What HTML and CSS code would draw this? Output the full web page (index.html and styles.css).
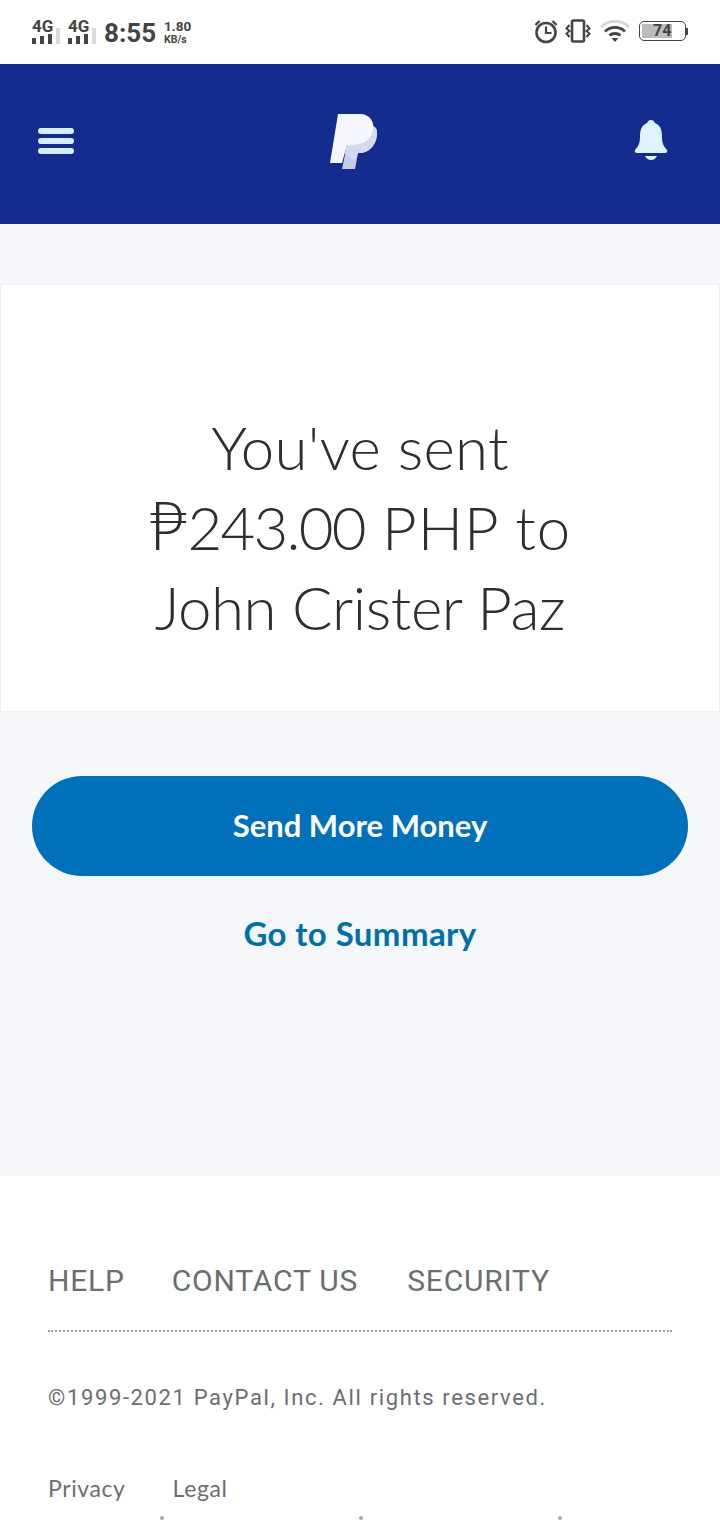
FILE: index.html
```html
<!DOCTYPE html>
<html lang="en">
  <head>
    <meta charset="UTF-8" />
    <meta name="viewport" content="width=device-width, initial-scale=1.0" />
    <title>PayPal - Money Sent</title>
    <link rel="stylesheet" href="styles.css">
  </head>
  <body>
    <div class="status-bar">
      <div class="status-left">
        <div class="signal">
          <span class="signal-label">4G</span>
          <svg class="signal-bars" width="28" height="17" viewBox="0 0 28 17">
            <rect x="0" y="11" width="4" height="6" fill="#444" />
            <rect x="8" y="9" width="4" height="8" fill="#444" />
            <rect x="16" y="7" width="4" height="10" fill="#444" />
            <rect x="24" y="1" width="4" height="16" fill="#d8d8d8" />
          </svg>
        </div>
        <div class="signal">
          <span class="signal-label">4G</span>
          <svg class="signal-bars" width="28" height="17" viewBox="0 0 28 17">
            <rect x="0" y="11" width="4" height="6" fill="#444" />
            <rect x="8" y="9" width="4" height="8" fill="#444" />
            <rect x="16" y="7" width="4" height="10" fill="#444" />
            <rect x="24" y="1" width="4" height="16" fill="#d8d8d8" />
          </svg>
        </div>
        <span class="clock">8:55</span>
        <div class="speed"><span>1.80</span><span class="speed-unit">KB/s</span></div>
      </div>
      <div class="status-right">
        <svg width="24" height="26" viewBox="0 0 24 26" fill="none" stroke="#444">
          <circle cx="12" cy="14.500" r="9.500" stroke-width="2.600" />
          <path d="M12 8.500v6.500h5.500" stroke-width="2.200" />
          <path d="M1.500 7l4-4M22.500 7l-4-4" stroke-width="2.400" />
        </svg>
        <svg class="vibrate" width="26" height="26" viewBox="0 0 26 26" fill="none" stroke="#444">
          <rect x="7" y="2.500" width="12" height="21" rx="1.500" stroke-width="2.600" />
          <path d="M4.500 7L1.500 10.500 4.500 13 1.500 15.500 4.500 19M21.500 7l3 3.500-3 2.500 3 2.500-3 3.500" stroke-width="2" />
        </svg>
        <svg width="30" height="24" viewBox="0 0 30 24" fill="none">
          <path d="M1 8C9 .5 21 .5 29 8" stroke="#d4d4d4" stroke-width="2.600" />
          <path d="M5 12.500C11 7 19 7 25 12.500" stroke="#444" stroke-width="2.800" />
          <path d="M9.500 16.500C12.500 13.800 17.500 13.800 20.500 16.500" stroke="#444" stroke-width="2.800" />
          <path d="M11.500 19h7L15 23z" fill="#444" />
        </svg>
        <div class="battery">
          <div class="battery-body"><span class="battery-level">74</span></div>
          <span class="battery-tip"></span>
        </div>
      </div>
    </div>

    <header class="topbar">
      <div class="menu-icon"><span></span><span></span><span></span></div>
      <svg class="logo" width="52" height="59" viewBox="28 21 52 59">
        <path d="M47 54L42 78H55L58 62H60C68 62 76 55 77 44 77.500 39 76 36 73 35z" fill="#c6cbe8" />
        <path d="M38 23H60C70 23 75 31 73 40 71 49 63 54 53 54H47L42 72H30z" fill="#f6f7fd" />
        <path d="M47 54H53C63 54 71 49 73 40 73.500 38 73.500 36 73 35 76 36 77.500 39 77 44 76 55 68 62 60 62H58L55 70 45 62z" fill="#d5d9ef" />
      </svg>
      <svg class="bell" width="34" height="42" viewBox="0 0 34 42">
        <path d="M17 1c2.500 0 3.500 1.500 3.800 3C27 6 28 12 28 18c0 6 1.500 9 5 13 .8 1.500 0 3-2 3H3c-2 0-2.800-1.500-2-3 3.500-4 5-7 5-13 0-6 1-12 7.200-14C13.500 2.500 14.500 1 17 1z" fill="#ddf3ff" />
        <path d="M11 37h12c-1.500 3-4 4-6 4s-4.500-1-6-4z" fill="#ddf3ff" />
      </svg>
    </header>

    <main class="content">
      <section class="card">
        <h1 class="card-title">
          <span class="line-sent">You've sent</span><br>
          <span class="peso">₱</span><span class="amount">243.00</span><span class="currency"> PHP to</span><br>
          <span class="payee">John Crister Paz</span>
        </h1>
      </section>
      <div class="actions">
        <a class="btn-primary">Send More Money</a>
        <a class="link-summary">Go to Summary</a>
      </div>
    </main>

    <footer class="footer">
      <nav class="footer-nav">
        <a class="nav-help">HELP</a>
        <a>CONTACT US</a>
        <a>SECURITY</a>
      </nav>
      <p class="copyright">©1999-2021 PayPal, Inc. All rights reserved.</p>
      <div class="footer-links">
        <a>Privacy</a>
        <a>Legal</a>
      </div>
      <div class="footer-dots"><span></span><span></span><span></span></div>
    </footer>
  </body>
</html>
```

FILE: styles.css
```css
html,
body {
  height: 1520px;
  overflow: hidden;
}
body {
  margin: 0;
  font-family: "Lato", "Liberation Sans", sans-serif;
  background-color: #fff;
}
.status-bar {
  height: 64px;
  padding: 0 32px;
  display: flex;
  justify-content: space-between;
  align-items: center;
  box-sizing: border-box;
}
.status-left {
  display: flex;
  align-items: center;
  gap: 8px;
  color: #444;
  font-family: "Roboto", sans-serif;
  font-weight: 700;
}
.signal {
  width: 28px;
  height: 24px;
  margin-top: -1px;
  display: flex;
  flex-direction: column;
  line-height: 1;
  position: relative;
}
.signal-label {
  font-size: 17px;
  height: 13px;
  line-height: 13px;
}
.signal-bars {
  position: absolute;
  left: 0;
  bottom: 0;
}
.clock {
  font-size: 26px;
  margin-top: 2px;
}
.speed {
  display: flex;
  flex-direction: column;
  font-size: 13.500px;
  line-height: 13px;
  margin-top: 2px;
}
.speed-unit {
  font-size: 10.500px;
}
.status-right {
  display: flex;
  align-items: center;
  gap: 7px;
  padding-bottom: 2px;
}
.vibrate {
  margin-right: 2px;
}
.battery {
  display: flex;
  align-items: center;
  margin-left: 2px;
}
.battery-body {
  width: 47px;
  height: 20px;
  border: 1.500px solid #444;
  border-radius: 5px;
  padding: 2px;
  box-sizing: border-box;
  display: flex;
}
.battery-level {
  background-color: #bbb;
  width: 30px;
  padding-left: 11px;
  box-sizing: border-box;
  font-family: "Roboto", sans-serif;
  font-weight: 700;
  font-size: 16px;
  line-height: 14px;
  color: #444;
}
.battery-tip {
  width: 2px;
  height: 7px;
  background-color: #444;
}
.topbar {
  height: 160px;
  background-color: #142c8e;
  padding: 0 52px 6px 38px;
  box-sizing: border-box;
  display: flex;
  justify-content: space-between;
  align-items: center;
}
.menu-icon {
  width: 36px;
  display: flex;
  flex-direction: column;
  gap: 4px;
}
.menu-icon span {
  height: 6px;
  border-radius: 3px;
  background-color: #d4edff;
}
.bell {
  margin-bottom: 3px;
}
.content {
  height: 952px;
  background-color: #f5f7fa;
  padding-top: 60px;
  box-sizing: border-box;
}
.card {
  height: 428px;
  padding-top: 58px;
  background-color: #fff;
  border: 1px solid #eef0f2;
  box-sizing: border-box;
  margin: 0 0 64px;
  display: flex;
  align-items: center;
  justify-content: center;
}
.card-title {
  margin: 0;
  text-align: center;
  font-weight: 300;
  font-size: 60px;
  line-height: 80px;
  color: #2c2e2f;
}
.line-sent {
  letter-spacing: 0.300px;
}
.peso {
  font-size: 67px;
  font-weight: 300;
  line-height: 0;
}
.amount {
  letter-spacing: -1.800px;
}
.currency {
  letter-spacing: 1px;
}
.payee {
  letter-spacing: -0.400px;
}
.actions {
  padding: 0 32px;
  display: flex;
  flex-direction: column;
  align-items: center;
}
.btn-primary {
  width: 100%;
  height: 100px;
  padding-bottom: 3px;
  box-sizing: border-box;
  border-radius: 50px;
  background-color: #0070ba;
  color: #fff;
  font-size: 31px;
  font-weight: 700;
  display: flex;
  align-items: center;
  justify-content: center;
}
.link-summary {
  margin-top: 37px;
  color: #0070a8;
  font-size: 33px;
  letter-spacing: 0.400px;
  font-weight: 700;
}
.footer {
  padding: 87px 48px 0;
  color: #6b6e71;
}
.footer-nav {
  display: flex;
  gap: 49px;
  font-family: "Roboto", sans-serif;
  font-size: 30px;
  line-height: 36px;
  letter-spacing: 0.800px;
  padding-bottom: 31px;
  border-bottom: 2px dotted #a0a0a0;
}
.nav-help {
  margin-right: -2px;
}
.copyright {
  margin: 51px 0 0;
  font-family: "Roboto", sans-serif;
  font-size: 22px;
  line-height: 30px;
  letter-spacing: 1.630px;
}
.footer-links {
  display: flex;
  gap: 47px;
  margin-top: 60px;
  font-size: 23px;
  line-height: 30px;
  letter-spacing: 0.600px;
}
.footer-dots {
  display: flex;
  gap: 195px;
  padding-left: 112px;
  margin-top: 13px;
}
.footer-dots span {
  width: 4px;
  height: 4px;
  border-radius: 50%;
  background-color: #a8a8a8;
}
```
